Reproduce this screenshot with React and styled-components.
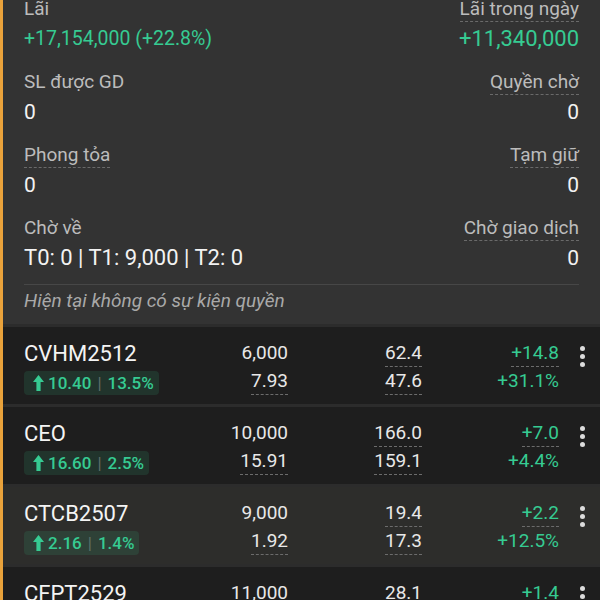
import styled, { createGlobalStyle } from 'styled-components'

const GlobalStyle = createGlobalStyle`
    html, body {
        margin: 0;
        padding: 0;
        background: #1e1e1e;
        font-family: Roboto, 'Noto Sans', sans-serif;
        overflow: hidden;
    }
`

const GREEN = '#36cb92'

const Screen = styled.div`
    width: 600px;
    height: 600px;
    overflow: hidden;
    border-left: 3px solid #e9a23b;
    box-sizing: border-box;
    background: #1e1e1e;
`

const Summary = styled.section`
    background: #333333;
    margin-top: -4px;
    padding: 0 21px 0 21px;
`

const FieldGrid = styled.div`
    display: grid;
    grid-template-columns: 1fr 1fr;
    row-gap: 16px;
`

const Field = styled.div`
    display: flex;
    flex-direction: column;
    align-items: ${p => (p.right ? 'flex-end' : 'flex-start')};
    gap: 3px;
`

const Label = styled.span`
    font-size: 19px;
    line-height: 26px;
    color: #bcbcbc;
    border-bottom: ${p => (p.dashed ? '1px dashed #6a6a6a' : 'none')};
    height: ${p => (p.dashed ? '25px' : 'auto')};
`

const Value = styled.span`
    font-size: ${p => p.size || 21}px;
    line-height: 28px;
    color: ${p => (p.green ? GREEN : '#f2f2f2')};
`

const Notice = styled.div`
    margin-top: 12px;
    border-top: 1px solid #474747;
    padding: 3px 0 10px;
    font-size: 19px;
    line-height: 26px;
    font-style: italic;
    color: #a9a9a9;
`

const Row = styled.div`
    display: grid;
    grid-template-columns: 176px 88px 134px 137px 1fr;
    grid-template-rows: 26px 26px;
    row-gap: 2px;
    padding: 14px 0 9px 21px;
    border-top: 3px solid #2c2c2c;
    background: ${p => (p.active ? '#2d2d2b' : '#1e1e1e')};
`

const Name = styled.div`
    font-size: 22px;
    line-height: 26px;
    color: #f4f4f4;
`

const Cell = styled.div`
    justify-self: end;
    font-size: 19px;
    line-height: 24px;
    color: ${p => (p.green ? GREEN : '#e8e8e8')};
    border-bottom: 1px dashed ${p => (p.dashed ? '#6c6c6c' : 'transparent')};
`

const Badge = styled.div`
    justify-self: start;
    display: flex;
    align-items: center;
    gap: 4px;
    height: 24px;
    margin-top: 2px;
    padding: 0 5px 0 9px;
    border-radius: 4px;
    background: rgba(52, 201, 142, 0.13);
    color: ${GREEN};
    font-size: 17px;
    font-weight: 500;
`

const Pipe = styled.span`
    color: #5f6f68;
    font-weight: 400;
    margin: 0 2px;
`

const Kebab = styled.div`
    display: flex;
    flex-direction: column;
    align-items: center;
    gap: 3px;
    padding-top: 5px;
    margin-left: 18px;
    width: 10px;

    span {
        width: 5px;
        height: 5px;
        border-radius: 50%;
        background: #dcdcdc;
    }
`

const ArrowUp = () => (
    <svg width="11" height="16" viewBox="0 0 11 16">
        <path d="M5.5 0 L11 7 L7.6 7 L7.6 16 L3.4 16 L3.4 7 L0 7 Z" fill={GREEN} />
    </svg>
)

const fields = [
    { label: 'Lãi', value: '+17,154,000 (+22.8%)', green: true, size: 19.5 },
    { label: 'Lãi trong ngày', value: '+11,340,000', green: true, right: true, dashed: true, size: 22 },
    { label: 'SL được GD', value: '0' },
    { label: 'Quyền chờ', value: '0', right: true, dashed: true },
    { label: 'Phong tỏa', value: '0', dashed: true },
    { label: 'Tạm giữ', value: '0', right: true, dashed: true },
    { label: 'Chờ về', value: 'T0: 0 | T1: 9,000 | T2: 0', size: 22 },
    { label: 'Chờ giao dịch', value: '0', right: true, dashed: true },
]

const stocks = [
    { name: 'CVHM2512', price: '10.40', pct: '13.5%', qty: '6,000', cost: '7.93', val: '62.4', costVal: '47.6', pl: '+14.8', plPct: '+31.1%' },
    { name: 'CEO', price: '16.60', pct: '2.5%', qty: '10,000', cost: '15.91', val: '166.0', costVal: '159.1', pl: '+7.0', plPct: '+4.4%' },
    { name: 'CTCB2507', price: '2.16', pct: '1.4%', qty: '9,000', cost: '1.92', val: '19.4', costVal: '17.3', pl: '+2.2', plPct: '+12.5%', active: true },
    { name: 'CFPT2529', price: '1.20', pct: '0.8%', qty: '11,000', cost: '1.07', val: '28.1', costVal: '26.7', pl: '+1.4', plPct: '+5.2%' },
]

export default function App() {
    return (
        <Screen>
            <GlobalStyle />
            <Summary>
                <FieldGrid>
                    {fields.map(f => (
                        <Field key={f.label} right={f.right}>
                            <Label dashed={f.dashed}>{f.label}</Label>
                            <Value green={f.green} size={f.size}>{f.value}</Value>
                        </Field>
                    ))}
                </FieldGrid>
                <Notice>Hiện tại không có sự kiện quyền</Notice>
            </Summary>
            {stocks.map(s => (
                <Row key={s.name} active={s.active}>
                    <Name>{s.name}</Name>
                    <Cell>{s.qty}</Cell>
                    <Cell dashed>{s.val}</Cell>
                    <Cell green dashed>{s.pl}</Cell>
                    <Kebab><span /><span /><span /></Kebab>
                    <Badge>
                        <ArrowUp />
                        <span>{s.price}</span>
                        <Pipe>|</Pipe>
                        <span>{s.pct}</span>
                    </Badge>
                    <Cell dashed>{s.cost}</Cell>
                    <Cell dashed>{s.costVal}</Cell>
                    <Cell green>{s.plPct}</Cell>
                    <div />
                </Row>
            ))}
        </Screen>
    )
}
